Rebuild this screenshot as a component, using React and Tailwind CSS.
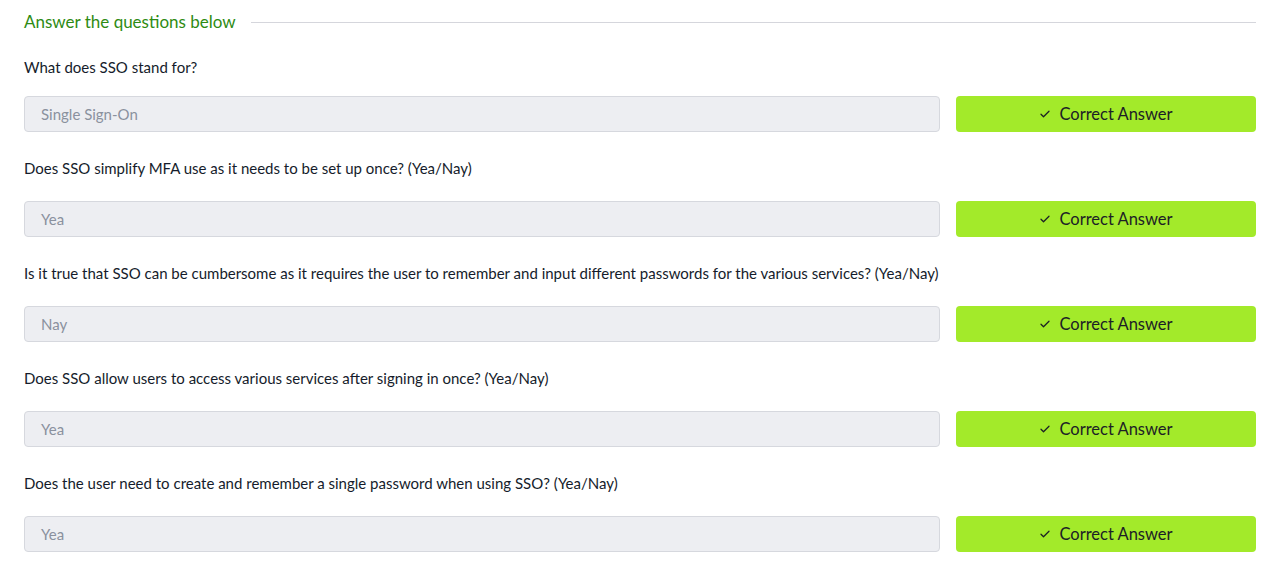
import React from 'react';

const questions = [
  { q: 'What does SSO stand for?', a: 'Single Sign-On' },
  { q: 'Does SSO simplify MFA use as it needs to be set up once? (Yea/Nay)', a: 'Yea' },
  { q: 'Is it true that SSO can be cumbersome as it requires the user to remember and input different passwords for the various services? (Yea/Nay)', a: 'Nay' },
  { q: 'Does SSO allow users to access various services after signing in once? (Yea/Nay)', a: 'Yea' },
  { q: 'Does the user need to create and remember a single password when using SSO? (Yea/Nay)', a: 'Yea' },
];

const Check = () => (
  <svg width="12" height="12" viewBox="0 0 24 24" fill="none" stroke="currentColor" strokeWidth="2.5" strokeLinecap="round" strokeLinejoin="round">
    <path d="M4 12.5l5 5L20 6.5" />
  </svg>
);

const App = () => {
  return (
    <div className="min-h-[580px] bg-white pl-6 pr-[30px] pt-[10px] font-['Lato','Noto_Sans',sans-serif]">
      {/* titel */}
      <div className="flex items-center gap-[15px]">
        <h3 className="text-[17px] leading-[24px] text-[#2e8b13] whitespace-nowrap">Answer the questions below</h3>
        <div className="h-px flex-1 bg-[#d5d6dc]" />
      </div>

      <div className="mt-[23px] flex flex-col gap-[26px]">
        {questions.map((item, i) => (
          <div key={i}>
            <p className="text-[15px] leading-[20px] text-[#151c2b]">{item.q}</p>
            <div className={i === 0 ? 'mt-[19px] flex gap-4' : 'mt-[23px] flex gap-4'}>
              <div className="flex h-9 flex-1 items-center rounded-[4px] border border-[#d6d8de] bg-[#edeef2] px-4 text-[15px] text-[#8a919e]">
                {item.a}
              </div>
              <button className="flex h-9 w-[300px] items-center justify-center gap-2 rounded-[4px] bg-[#a3ea2a] text-[16.5px] text-[#1c2126]">
                <Check />
                Correct Answer
              </button>
            </div>
          </div>
        ))}
      </div>
    </div>
  );
};

export default App;
